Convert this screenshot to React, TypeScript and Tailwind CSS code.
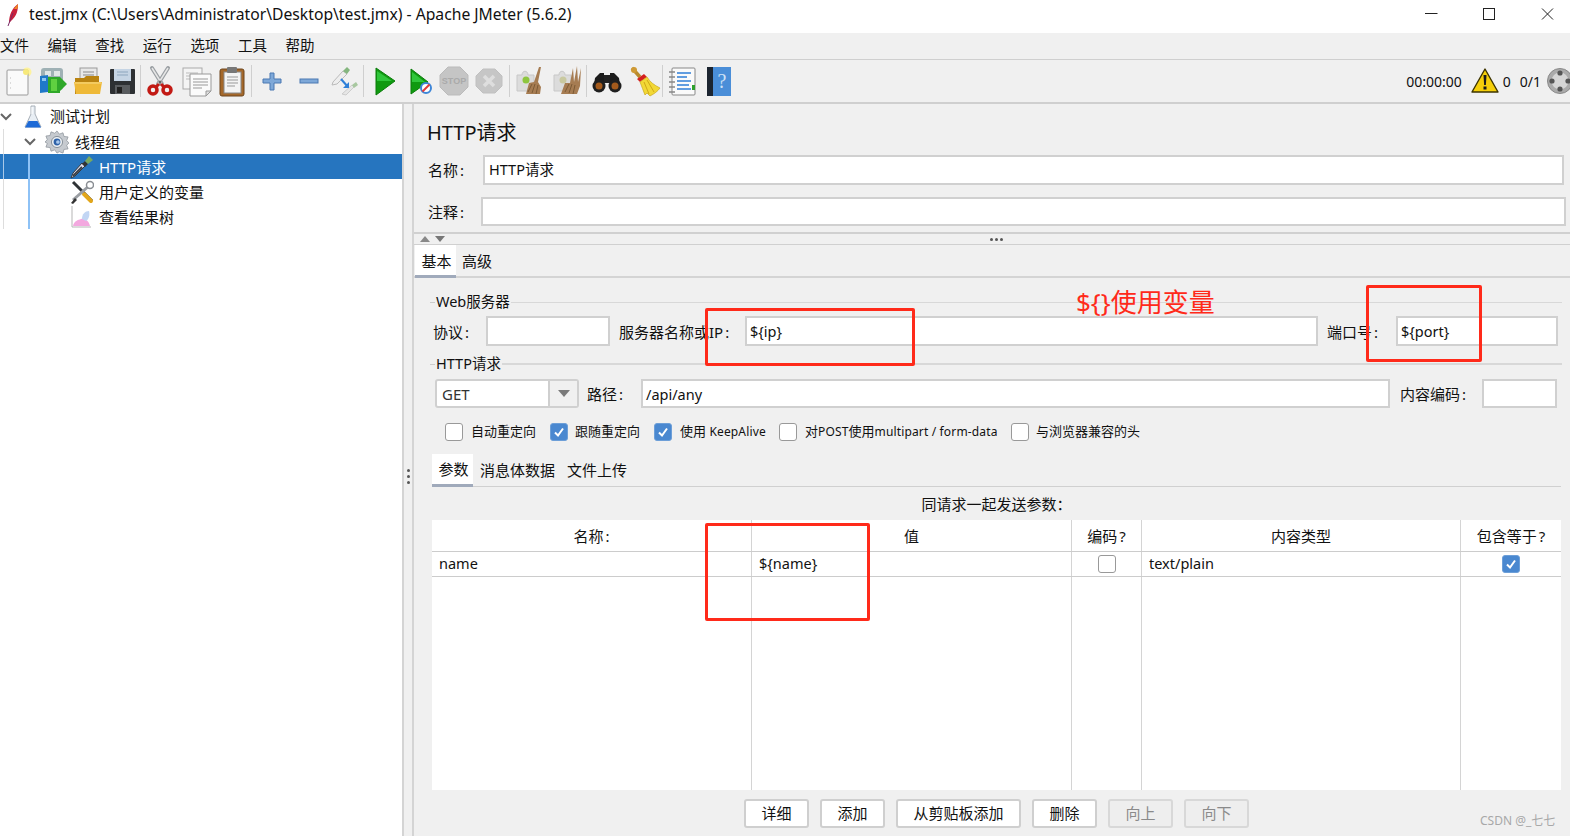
import React from "react";

const Ico = ({ s = 32, children, vb = 32 }: { s?: number; children: React.ReactNode; vb?: number }) => (
  <svg width={s} height={s} viewBox={`0 0 ${vb} ${vb}`} fill="none" className="block shrink-0">{children}</svg>
);

const NewIco = () => (
  <Ico><circle cx="25" cy="7" r="4.5" fill="#fdf2a0" /><rect x="5" y="5" width="21" height="25" rx="1" fill="#fafafa" stroke="#9a9a9a" /><circle cx="24" cy="7" r="3" fill="#f7e97a" /><path d="M8 13h1M8 18h1M8 23h1" stroke="#bbb" /></Ico>
);
const TemplatesIco = () => (
  <Ico><rect x="4" y="3" width="22" height="22" rx="3" fill="#9fb1b5" /><rect x="8" y="6" width="6" height="5" fill="#dfe6e6" /><rect x="17" y="6" width="6" height="5" fill="#dfe6e6" /><path d="M3 11l8-1v17l-8 1z" fill="#1f78c8" /><path d="M5 13h4v3H5z" fill="#8cc6f0" /><path d="M11 12h12l7 7-7 7v2H11z" fill="#2fa82a" /><path d="M14 14h6v12h-6z" fill="#5fd040" /></Ico>
);
const OpenIco = () => (
  <Ico><rect x="8" y="3" width="17" height="14" fill="#e8e8e8" stroke="#999" /><path d="M11 7h11M11 10h11" stroke="#888" /><path d="M3 13h9l2-2h13v18H3z" fill="#b98311" /><path d="M2 17h28l-2 12H4z" fill="#eeb938" /><path d="M3 18h26" stroke="#f8dc88" /></Ico>
);
const SaveIco = () => (
  <Ico><rect x="3" y="4" width="25" height="25" rx="1" fill="#2d3033" /><rect x="7" y="4" width="17" height="12" fill="#c5d4e4" /><path d="M10 7h11M10 10h11" stroke="#8ca5bd" /><rect x="8" y="20" width="15" height="9" fill="#5a5d60" /><rect x="10" y="22" width="5" height="6" fill="#222" /></Ico>
);
const CutIco = () => (
  <Ico><path d="M8 3l10 16M24 3L14 19" stroke="#9a9fa3" strokeWidth="4" strokeLinecap="round" /><path d="M8 3l10 16M24 3L14 19" stroke="#e6e6e6" strokeWidth="1.5" /><circle cx="16" cy="17" r="1.5" fill="#666" /><circle cx="9" cy="25" r="4" stroke="#c21a14" strokeWidth="3.5" /><circle cx="23" cy="25" r="4" stroke="#c21a14" strokeWidth="3.5" /><path d="M12 22l3-3M20 22l-3-3" stroke="#c21a14" strokeWidth="3" /></Ico>
);
const CopyIco = () => (
  <Ico><rect x="3" y="3" width="19" height="21" fill="#f4f4f4" stroke="#aaa" /><path d="M6 8h12M6 11h12M6 14h12" stroke="#bbb" /><path d="M10 9h21v17l-5 5H10z" fill="#fbfbfb" stroke="#999" /><path d="M13 14h15M13 17h15M13 20h15M13 23h9" stroke="#999" /><path d="M26 31v-5h5z" fill="#ddd" stroke="#999" /></Ico>
);
const PasteIco = () => (
  <Ico><rect x="4" y="4" width="24" height="27" rx="2" fill="#a5682a" stroke="#6c451c" /><rect x="8" y="7" width="17" height="21" fill="#f4f4f4" stroke="#888" /><rect x="11" y="2" width="10" height="6" rx="1" fill="#777" /><path d="M11 12h11M11 15h11M11 18h11M11 21h8" stroke="#999" /></Ico>
);
const PlusIco = () => (
  <Ico><path d="M14 8h4v6h7v4h-7v7h-4v-7H7v-4h7z" fill="#7ea8d8" stroke="#4a78b2" /></Ico>
);
const MinusIco = () => (
  <Ico><rect x="7" y="14" width="18" height="4" fill="#7ea8d8" stroke="#4a78b2" /></Ico>
);
const ToggleIco = () => (
  <Ico><path d="M5 17l10-11 4 3-10 10-5 1z" fill="#eee" stroke="#bbb" /><path d="M15 6l4-4 3 3-3 4z" fill="#84b67e" /><path d="M14 29l10-9 2 2-8 8z" fill="#e6e6e6" stroke="#ccc" /><path d="M24 20l4-3 2 3-4 3z" fill="#a8c8a0" /><path d="M13 14l7 8" stroke="#2f80d8" strokeWidth="2" /><path d="M21 17v6h-6" fill="#2f80d8" /></Ico>
);
const PlayIco = () => (
  <Ico><path d="M7 3l19 13L7 30z" fill="#109a10" stroke="#0a7d0a" /><path d="M8 6l15 10L8 16z" fill="#2fc63a" /></Ico>
);
const PlayNoIco = () => (
  <Ico><path d="M6 4l17 13L6 29z" fill="#109a10" stroke="#0a7d0a" /><path d="M7 7l13 10H7z" fill="#2fc63a" /><circle cx="21" cy="23" r="5" fill="#fff" stroke="#3d86d8" strokeWidth="2" /><path d="M24.500 19.500l-7 7" stroke="#e23a3a" strokeWidth="2" /></Ico>
);
const StopIco = () => (
  <Ico><path d="M10 2h12l8 8v12l-8 8H10l-8-8V10z" fill="#c5c5c5" stroke="#bbb" /><text x="16" y="19" fontSize="9" fontWeight="700" textAnchor="middle" fill="#aaa" fontFamily="Liberation Sans, sans-serif">STOP</text></Ico>
);
const ShutIco = () => (
  <Ico><path d="M10 4h12l7 7v10l-7 7H10l-7-7V11z" fill="#c6c6c6" stroke="#c0c0c0" /><path d="M11 11l10 10M21 11L11 21" stroke="#dedede" strokeWidth="3.5" /></Ico>
);
const ClearIco = ({ many = false }: { many?: boolean }) => (
  <Ico><path d="M3 10h5c0-5 6-5 6 0h6v7c5 0 5 6 0 6v3H3z" fill="#dcdcdc" stroke="#c8c8c8" /><circle cx="12" cy="15" r="3.500" fill={many ? "#c9c9a0" : "#8ec63f"} /><path d={many ? "M10 29l4-11 5 0 3-15 1 14 3-16 1 16 3-14-1 18-3 8z" : "M12 29l3-11 5-1 5-15 2 0-3 15 3 5-1 7z"} fill="#a67c52" /><path d="M14 27l4-8M18 28l3-9M22 29l2-9" stroke="#7c5a35" /></Ico>
);
const BinoIco = () => (
  <Ico><rect x="10" y="10" width="12" height="8" fill="#222" /><path d="M4 13l5-5h4v12H3z" fill="#1c1c1c" /><path d="M28 13l-5-5h-4v12h10z" fill="#1c1c1c" /><circle cx="8" cy="21" r="6.500" fill="#1f1f1f" /><circle cx="24" cy="21" r="6.500" fill="#1f1f1f" /><circle cx="8" cy="21" r="3.500" fill="#a35a1c" /><circle cx="24" cy="21" r="3.500" fill="#a35a1c" /></Ico>
);
const BroomIco = () => (
  <Ico><path d="M3 3l8 9" stroke="#b98a2e" strokeWidth="3.500" /><circle cx="5" cy="5" r="3" fill="#cf9a35" /><path d="M8 14l7-5 3 3-7 5z" fill="#d41f1f" /><path d="M11 17l7-5c3 5 7 8 13 11-2 3-6 6-10 8l-3-3-2 2c-2-4-3-9-5-13z" fill="#f2d835" stroke="#c8a820" strokeWidth=".7" /><path d="M15 17l5 12M18 15l7 12" stroke="#d0a818" /></Ico>
);
const LogIco = () => (
  <Ico><rect x="6" y="3" width="23" height="27" rx="1" fill="#fafafa" stroke="#888" /><path d="M3 7h6M3 12h6M3 17h6M3 22h6M3 27h6" stroke="#888" strokeWidth="1.600" /><path d="M11 8h14M11 12h10M11 16h14M11 20h12M11 24h14" stroke="#2f7fd8" strokeWidth="1.300" /><rect x="26" y="20" width="3" height="5" fill="#2da02d" /></Ico>
);
const HelpIco = () => (
  <Ico><rect x="4" y="2" width="24" height="29" fill="#4a8ed8" /><rect x="4" y="2" width="6" height="29" fill="#1c2530" /><text x="19" y="23" fontSize="20" textAnchor="middle" fill="#cfe2f6" fontFamily="Liberation Serif, serif">?</text></Ico>
);
const Warn = () => (
  <svg width="28" height="26" viewBox="0 0 28 26" className="block shrink-0"><path d="M14 1L27 24H1z" fill="#f5cf0a" stroke="#3d3400" strokeWidth="1.400" strokeLinejoin="round" /><path d="M12.500 7h3l-.6 10h-1.800z" fill="#1c1c1c" /><rect x="12.500" y="18.500" width="3" height="3" fill="#1c1c1c" /></svg>
);
const GreyGear = () => (
  <svg width="26" height="26" viewBox="0 0 26 26" className="block shrink-0"><circle cx="13" cy="13" r="12.500" fill="#aaa" /><circle cx="13" cy="13" r="12.500" fill="none" stroke="#888" /><circle cx="13" cy="13" r="8.500" fill="#d5d5d5" /><circle cx="13" cy="5" r="2.600" fill="#555" /><circle cx="13" cy="21" r="2.600" fill="#555" /><circle cx="5" cy="13" r="2.600" fill="#555" /><circle cx="21" cy="13" r="2.600" fill="#555" /></svg>
);
const Feather = () => (
  <svg width="14" height="24" viewBox="0 0 14 24" className="block shrink-0"><path d="M3 20C3 12 6 5 12 1c0 6-1 12-7 17z" fill="#c8203c" /><path d="M8 6c1-2 3-4 4-5 0 2-.5 4-1 5z" fill="#f08a20" /><path d="M2 23L7 10" stroke="#7a2a66" strokeWidth="1" /></svg>
);
const Flask = () => (
  <svg width="22" height="24" viewBox="0 0 22 24" className="block shrink-0"><path d="M9 1h4v8l6 13H3L9 9z" fill="#e8eef4" stroke="#a8b0b8" /><path d="M6.500 16h9l3.500 6.500H3z" fill="#1e6ad6" /><path d="M10 2v7" stroke="#fff" /></svg>
);
const Gear = () => (
  <svg width="24" height="24" viewBox="0 0 26 26" className="block shrink-0"><path d="M13 1l2.500 3.500 4-1.500 1 4 4.500.5-1.500 4 2.500 2.500-2.500 2.500 1.500 4-4.500.5-1 4-4-1.500L13 25l-2.500-3.500-4 1.500-1-4-4.500-.5 1.500-4L0 13l2.500-2.500-1.500-4 4.500-.5 1-4 4 1.500z" fill="#c6cacf" stroke="#8d949b" strokeWidth=".8" /><circle cx="13" cy="13" r="6" fill="#eef1f4" stroke="#7f8992" /><circle cx="13" cy="13" r="3.700" fill="#2e62a8" /><circle cx="14" cy="13" r="2" fill="#a9c8ec" /></svg>
);
const Dropper = () => (
  <svg width="24" height="24" viewBox="0 0 24 24" fill="none" className="block shrink-0"><path d="M1 23l4-2 10-10-3-3L3 18z" fill="#dde" stroke="#33393f" /><path d="M3 21l9-9" stroke="#3a3f44" strokeWidth="2" /><path d="M12 9l3-3 3 3-3 3z" fill="#333" /><path d="M15 6l4-5 4 4-5 4z" fill="#78a860" /></svg>
);
const Tools = () => (
  <svg width="24" height="24" viewBox="0 0 24 24" fill="none" className="block shrink-0"><path d="M3 2l19 19" stroke="#2f3336" strokeWidth="3" /><path d="M14 14l7 7" stroke="#e2a61a" strokeWidth="4" strokeLinecap="round" /><path d="M3 20L20 5" stroke="#9a9ea3" strokeWidth="3" /><circle cx="20" cy="5" r="3.500" fill="#fff" stroke="#8a8e93" strokeWidth="1.500" /><path d="M1 23l4-5 2 2-4 4z" fill="#333" /></svg>
);
const Chart = () => (
  <svg width="22" height="24" viewBox="0 0 22 24" fill="none" className="block shrink-0"><path d="M2 1v21h19" stroke="#b5b5b5" /><path d="M3 21c1-5 5-6 8-7 4-1 8 2 9 7z" fill="#f3a8df" /><path d="M12 14c0-5 3-8 7-8 1 4 0 8-3 10z" fill="#c2d6f4" /></svg>
);

const C = () => <span className="ml-[2px]">:</span>;
const Q = () => <span className="ml-[2px]">?</span>;
const Sep = ({ className = "" }: { className?: string }) => <div className={`w-px h-[32px] bg-[#cfcfcf] shrink-0 ${className}`} />;
const Cell = ({ children, w = "w-[35px]" }: { children: React.ReactNode; w?: string }) => (
  <div className={`${w} h-[42px] flex items-center justify-center shrink-0`}>{children}</div>
);

const Field = ({ className = "", children }: { className?: string; children?: React.ReactNode }) => (
  <div className={`bg-white border-2 border-[#d0d0d0] flex items-center pl-[3px] text-[14.500px] shrink-0 ${className}`}>{children}</div>
);
const Box = ({ on = false }: { on?: boolean }) =>
  on ? (
    <div className="w-[18px] h-[18px] rounded-[3px] bg-[#4a88d0] border border-[#6d9fd8] flex items-center justify-center shrink-0">
      <svg width="12" height="12" viewBox="0 0 12 12"><path d="M2 6.500l3 3 5-7" stroke="#fff" strokeWidth="2" fill="none" /></svg>
    </div>
  ) : (
    <div className="w-[18px] h-[18px] rounded-[3px] bg-white border border-[#999] shrink-0" />
  );
const Legend = ({ text, className = "", line = "h-[2px]" }: { text: string; className?: string; line?: string }) => (
  <div className={`flex items-center h-[20px] pl-[16px] pr-[8px] ${className}`}>
    <div className="w-[5px] h-px bg-[#ccc] shrink-0" />
    <span className="px-[1px] text-[14.500px] leading-[20px] relative -top-[1px]">{text}</span>
    <div className={`flex-1 bg-[#d8d8d8] ${line}`} />
  </div>
);
const Btn = ({ children, w, off = false }: { children: string; w: string; off?: boolean }) => (
  <div className={`${w} h-[29px] rounded-[3px] border-2 flex items-center justify-center text-[15px] shrink-0 ${off ? "bg-[#eeeeee] border-[#d8d8d8] text-[#8a8a8a]" : "bg-white border-[#cfcfcf] text-[#111]"}`}>{children}</div>
);

const Row = ({ children, className = "" }: { children: React.ReactNode; className?: string }) => (
  <div className={`h-[25px] flex items-center text-[15px] ${className}`}>{children}</div>
);
const L = ({ children }: { children: string }) => <span className="text-[12px] tracking-[0.15px]">{children}</span>;

export default function App() {
  const menus = ["文件", "编辑", "查找", "运行", "选项", "工具", "帮助"];
  return (
    <div className="relative w-[1570px] h-[836px] overflow-hidden bg-[#f0f0f0] text-[#111] flex flex-col [font-family:'Noto_Sans','Noto_Sans_CJK_SC',sans-serif]">
      {/* title bar */}
      <div className="h-[33px] bg-white flex items-center shrink-0 pb-[4px]">
        <div className="ml-[6px] w-[23px]"><Feather /></div>
        <span className="text-[15.700px] text-[#111]">test.jmx (C:\Users\Administrator\Desktop\test.jmx) - Apache JMeter (5.6.2)</span>
        <div className="ml-auto flex items-center">
          <svg width="130" height="16" viewBox="0 0 130 16" className="mr-[15px] block">
            <path d="M0 6.500h12.500" stroke="#222" />
            <rect x="58.500" y="1.500" width="11" height="11" stroke="#222" fill="none" />
            <path d="M117 1.500l11 11M128 1.500l-11 11" stroke="#222" />
          </svg>
        </div>
      </div>
      {/* menu */}
      <div className="h-[27px] flex items-center border-b border-[#cfcfcf] shrink-0 pb-[3px]">
        {menus.map((m) => (
          <div key={m} className="w-[47.600px] text-[14.500px] leading-[24px]">{m}</div>
        ))}
      </div>
      {/* toolbar */}
      <div className="h-[42px] flex items-center border-b-2 border-[#cfcfcf] box-content shrink-0">
        <Cell><NewIco /></Cell><Cell><TemplatesIco /></Cell><Cell><OpenIco /></Cell><Cell><SaveIco /></Cell>
        <Sep />
        <Cell w="w-[37px]"><CutIco /></Cell><Cell w="w-[36px]"><CopyIco /></Cell><Cell w="w-[36px]"><PasteIco /></Cell>
        <Sep className="ml-[1px]" />
        <Cell w="w-[39px]"><PlusIco /></Cell><Cell><MinusIco /></Cell><Cell w="w-[36px]"><ToggleIco /></Cell>
        <Sep className="ml-[1px]" />
        <Cell w="w-[42px]"><PlayIco /></Cell><Cell w="w-[30px]"><PlayNoIco /></Cell><Cell><StopIco /></Cell><Cell><ShutIco /></Cell>
        <Sep className="ml-[3px]" />
        <Cell w="w-[39px]"><ClearIco /></Cell><Cell w="w-[35px]"><ClearIco many /></Cell>
        <Sep className="ml-[2px]" />
        <Cell w="w-[40px]"><BinoIco /></Cell><Cell w="w-[35px]"><BroomIco /></Cell>
        <Sep />
        <Cell w="w-[38px]"><LogIco /></Cell><Cell w="w-[35px]"><HelpIco /></Cell>
        <div className="ml-auto flex items-center text-[14px] -mr-[3px]">
          <span>00:00:00</span>
          <div className="ml-[9px]"><Warn /></div>
          <span className="ml-[4px]">0</span>
          <span className="ml-[9px]">0/1</span>
          <div className="ml-[6px]"><GreyGear /></div>
        </div>
      </div>
      {/* body */}
      <div className="flex-1 flex min-h-0">
        {/* tree */}
        <div className="w-[402px] bg-white shrink-0 relative">
          <Row>
            <svg width="12" height="8" viewBox="0 0 12 8" className="block"><path d="M1 1l5 5 5-5" stroke="#666" strokeWidth="2" fill="none" /></svg>
            <div className="ml-[10px]"><Flask /></div>
            <span className="ml-[6px]">测试计划</span>
          </Row>
          <Row>
            <div className="w-px h-full bg-[#ddd] ml-[3px]" />
            <svg width="12" height="8" viewBox="0 0 12 8" className="ml-[20px] block"><path d="M1 1l5 5 5-5" stroke="#666" strokeWidth="2" fill="none" /></svg>
            <div className="ml-[9px]"><Gear /></div>
            <span className="ml-[6px] pt-[2px]">线程组</span>
          </Row>
          <Row className="bg-[#2675bf] text-white">
            <div className="w-px h-full bg-[#a8c8e8] ml-[3px]" />
            <div className="w-[2px] h-full bg-[#8ec2f6] ml-[24px]" />
            <div className="ml-[40px]"><Dropper /></div>
            <span className="ml-[5px] pt-[2px]">HTTP请求</span>
          </Row>
          <Row>
            <div className="w-px h-full bg-[#ddd] ml-[3px]" />
            <div className="w-[2px] h-full bg-[#8ec2f6] ml-[24px]" />
            <div className="ml-[40px]"><Tools /></div>
            <span className="ml-[5px] pt-[2px]">用户定义的变量</span>
          </Row>
          <Row>
            <div className="w-px h-full bg-[#ddd] ml-[3px]" />
            <div className="w-[2px] h-full bg-[#8ec2f6] ml-[24px]" />
            <div className="ml-[40px]"><Chart /></div>
            <span className="ml-[7px] pt-[2px]">查看结果树</span>
          </Row>
        </div>
        {/* splitter */}
        <div className="w-[12px] shrink-0 border-l-2 border-r-2 border-[#d4d4d4] flex flex-col items-center justify-center gap-[3px] pt-[12px]">
          <div className="w-[3px] h-[3px] rounded-full bg-[#555]" />
          <div className="w-[3px] h-[3px] rounded-full bg-[#555]" />
          <div className="w-[3px] h-[3px] rounded-full bg-[#555]" />
        </div>
        {/* right panel */}
        <div className="flex-1 min-w-0 flex flex-col">
          <div className="h-[28px] mt-[15px] pl-[13px] text-[20px] leading-[28px]">HTTP请求</div>
          <div className="mt-[8px] h-[30px] flex pl-[14px] pr-[6px] items-center">
            <span className="w-[55px] text-[15px] shrink-0">名称<C /></span>
            <Field className="flex-1 h-[30px] pl-[4px]">HTTP请求</Field>
          </div>
          <div className="mt-[12px] h-[29px] flex pl-[14px] pr-[4px] items-center">
            <span className="w-[53px] text-[15px] shrink-0 pt-[2px]">注释<C /></span>
            <Field className="flex-1 h-[29px]" />
          </div>
          <div className="mt-[6px] h-[2px] bg-[#d0d0d0] shrink-0" />
          <div className="h-[10px] flex items-center shrink-0 pl-[6px] gap-[5px] relative">
            <svg width="10" height="6" viewBox="0 0 10 6"><path d="M5 0l5 6H0z" fill="#888" /></svg>
            <svg width="10" height="6" viewBox="0 0 10 6"><path d="M5 6L0 0h10z" fill="#777" /></svg>
            <div className="ml-[540px] flex gap-[2px]">
              <div className="w-[3px] h-[3px] rounded-full bg-[#555]" />
              <div className="w-[3px] h-[3px] rounded-full bg-[#555]" />
              <div className="w-[3px] h-[3px] rounded-full bg-[#555]" />
            </div>
          </div>
          <div className="h-px bg-[#d0d0d0] shrink-0" />
          <div className="h-[33px] flex border-b-2 border-[#d4d4d4] text-[15px] shrink-0">
            <div className="w-[41px] ml-[1px] h-[33px] bg-white border-b-[3px] border-[#a0aabb] flex items-center justify-center pl-[2px] pt-[3px]">基本</div>
            <div className="ml-[6px] flex items-center pt-[2px]">高级</div>
          </div>
          <Legend text="Web服务器" className="mt-[14px]" line="h-px" />
          <div className="mt-[4px] h-[30px] flex items-center pl-[19px] text-[15px]">
            <span className="w-[53px] shrink-0 pt-[2px]">协议<C /></span>
            <Field className="w-[124px] h-[30px]" />
            <span className="ml-[9px] w-[126px] shrink-0 whitespace-nowrap pt-[2px]">服务器名称或IP<C /></span>
            <Field className="w-[573px] h-[30px] pt-[2px]">${"{ip}"}</Field>
            <span className="ml-[9px] w-[69px] shrink-0 pt-[2px]">端口号<C /></span>
            <Field className="w-[162px] h-[30px] pt-[2px]">${"{port}"}</Field>
          </div>
          <Legend text="HTTP请求" className="mt-[8px]" />
          <div className="mt-[5px] h-[29px] flex items-center pl-[21px] text-[15px]">
            <div className="w-[144px] h-[29px] bg-white border-2 border-[#d0d0d0] rounded-[3px] flex shrink-0">
              <div className="flex-1 pl-[5px] flex items-center text-[#333] pt-[2px]">GET</div>
              <div className="w-[29px] bg-[#f0f0f0] border-l-2 border-[#cfcfcf] flex items-center justify-center">
                <svg width="12" height="7" viewBox="0 0 12 7"><path d="M6 7L0 0h12z" fill="#7a7a7a" /></svg>
              </div>
            </div>
            <span className="ml-[8px] w-[54px] shrink-0 pt-[2px]">路径<C /></span>
            <Field className="w-[749px] h-[29px] pt-[2px]">/api/any</Field>
            <span className="ml-[10px] w-[82px] shrink-0 pt-[2px]">内容编码<C /></span>
            <Field className="w-[75px] h-[29px]" />
          </div>
          <div className="mt-[15px] h-[18px] flex items-center pl-[31px] text-[13px]">
            <Box /><span className="ml-[8px] w-[79px] shrink-0">自动重定向</span>
            <Box on /><span className="ml-[7px] w-[79px] shrink-0">跟随重定向</span>
            <Box on /><span className="ml-[8px] w-[99px] shrink-0 whitespace-nowrap">使用 <L>KeepAlive</L></span>
            <Box /><span className="ml-[8px] w-[206px] shrink-0 whitespace-nowrap">对<L>POST</L>使用<L>multipart / form-data</L></span>
            <Box /><span className="ml-[7px]">与浏览器兼容的头</span>
          </div>
          <div className="ml-[18px] mr-[9px] mt-[13px] h-[33px] flex border-b border-[#d0d0d0] text-[15px] shrink-0">
            <div className="w-[41px] h-[33px] bg-white border-b-[3px] border-[#a0aabb] flex items-center justify-center pl-[2px] pt-[1px]">参数</div>
            <div className="ml-[7px] flex items-center pt-[1px]">消息体数据</div>
            <div className="ml-[12px] flex items-center pt-[1px]">文件上传</div>
          </div>
          <div className="ml-[18px] mr-[9px] h-[33px] flex items-center justify-center text-[15px] shrink-0 pt-[1px]">同请求一起发送参数：</div>
          <div className="ml-[18px] mr-[9px] h-[270px] bg-white flex flex-col text-[15px] shrink-0">
            <div className="h-[32px] grid grid-cols-[319px_320px_70px_319px_101px] border-b border-[#ccc] shrink-0">
              <div className="flex items-center justify-center pt-[2px]">名称<C /></div>
              <div className="flex items-center justify-center border-l border-[#d4d4d4] pt-[2px]">值</div>
              <div className="flex items-center justify-center border-l border-[#d4d4d4] pt-[2px]">编码<Q /></div>
              <div className="flex items-center justify-center border-l border-[#d4d4d4] pt-[2px]">内容类型</div>
              <div className="flex items-center justify-center border-l border-[#d4d4d4] pt-[2px]">包含等于<Q /></div>
            </div>
            <div className="h-[25px] grid grid-cols-[319px_320px_70px_319px_101px] border-b border-[#ccc] shrink-0 text-[14.500px]">
              <div className="flex items-center pl-[7px]">name</div>
              <div className="flex items-center pl-[7px] border-l border-[#d4d4d4]">${"{name}"}</div>
              <div className="flex items-center justify-center border-l border-[#d4d4d4]"><Box /></div>
              <div className="flex items-center pl-[7px] border-l border-[#d4d4d4]">text/plain</div>
              <div className="flex items-center justify-center border-l border-[#d4d4d4]"><Box on /></div>
            </div>
            <div className="flex-1 grid grid-cols-[319px_320px_70px_319px_101px]">
              <div />
              <div className="border-l border-[#d4d4d4]" />
              <div className="border-l border-[#d4d4d4]" />
              <div className="border-l border-[#d4d4d4]" />
              <div className="border-l border-[#d4d4d4]" />
            </div>
          </div>
          <div className="mt-[9px] pl-[330px] flex gap-[11px] relative">
            <Btn w="w-[65px]">详细</Btn>
            <Btn w="w-[65px]">添加</Btn>
            <Btn w="w-[125px]">从剪贴板添加</Btn>
            <Btn w="w-[65px]">删除</Btn>
            <Btn w="w-[65px]" off>向上</Btn>
            <Btn w="w-[65px]" off>向下</Btn>
          </div>
        </div>
      </div>
      {/* annotations lying over the window */}
      <div className="absolute left-[705px] top-[308px] w-[210px] h-[58px] border-[3px] border-[#ff2a1a] rounded-[2px]" />
      <div className="absolute left-[1366px] top-[285px] w-[116px] h-[77px] border-[3px] border-[#ff2a1a] rounded-[2px]" />
      <div className="absolute left-[705px] top-[523px] w-[165px] h-[98px] border-[3px] border-[#ff2a1a] rounded-[2px]" />
      <div className="absolute left-[1076px] top-[283px] text-[26px] leading-[38px] text-[#ff2a1a]">{"${}使用变量"}</div>
      <div className="absolute left-[1480px] top-[813px] text-[12px] leading-[16px] text-[#a8a8a8]">CSDN @_七七</div>
    </div>
  );
}
